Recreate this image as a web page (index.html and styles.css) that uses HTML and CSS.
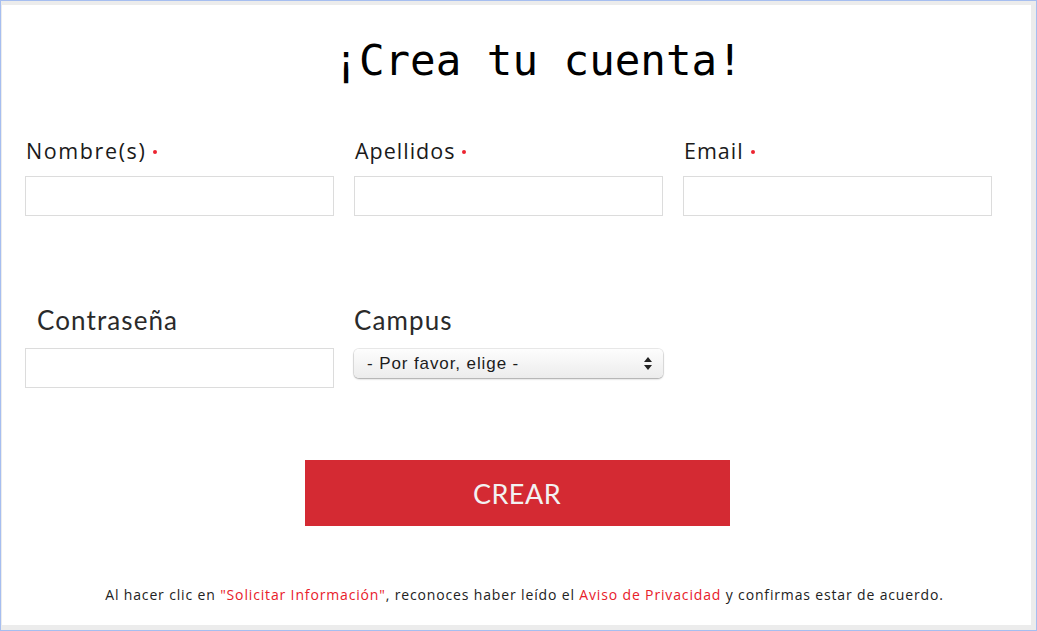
FILE: index.html
```html
<!DOCTYPE html>
<html lang="es">
<head>
<meta charset="utf-8">
<title>Crea tu cuenta</title>
<link rel="stylesheet" href="styles.css">
</head>
<body>
<div class="frame">
  <div class="card">
    <h1 class="title">¡Crea tu cuenta!</h1>
    <div class="row row-one">
      <div class="field">
        <label class="label label-wide">Nombre(s)<span class="req"></span></label>
        <input class="input" type="text">
      </div>
      <div class="field">
        <label class="label">Apellidos<span class="req"></span></label>
        <input class="input" type="text">
      </div>
      <div class="field">
        <label class="label">Email<span class="req"></span></label>
        <input class="input" type="text">
      </div>
    </div>
    <div class="row row-two">
      <div class="field">
        <label class="label-alt label-indent">Contraseña</label>
        <input class="input" type="password">
      </div>
      <div class="field">
        <label class="label-alt">Campus</label>
        <div class="select">
          <span class="select-text">- Por favor, elige -</span>
          <svg class="select-arrows" width="8" height="13" viewBox="0 0 8 13"><path d="M4 0 L8 5 H0 Z M0 8 H8 L4 13 Z" fill="#222"/></svg>
        </div>
      </div>
    </div>
    <div class="actions">
      <button class="btn" type="button">CREAR</button>
    </div>
    <p class="legal">Al hacer clic en <span class="link">"Solicitar Información"</span>, reconoces haber leído el <span class="link">Aviso de Privacidad</span> y confirmas estar de acuerdo.</p>
  </div>
</div>
</body>
</html>
```
FILE: styles.css
```css
html, body {
  margin: 0;
  padding: 0;
  background: #ffffff;
}
.frame {
  box-sizing: border-box;
  width: 1037px;
  height: 631px;
  border: 1px solid #a6bef0;
  background: #ececec;
  padding: 4px 5px 5px 1px;
}
.card {
  box-sizing: border-box;
  height: 100%;
  background: #ffffff;
  padding: 0 24px 0 23px;
  display: flex;
  flex-direction: column;
}
.title {
  margin: 31px 0 0 0;
  padding-left: 44px;
  text-align: center;
  font-family: "DejaVu Sans Mono", monospace;
  font-weight: normal;
  font-size: 42.5px;
  line-height: 50px;
  color: #000;
}
.row {
  display: grid;
  grid-template-columns: 309px 309px 309px;
  column-gap: 20px;
}
.row-one {
  margin-top: 50px;
}
.row-two {
  margin-top: 89px;
}
.field {
  display: flex;
  flex-direction: column;
}
.label {
  font-family: "Open Sans", sans-serif;
  font-size: 21.5px;
  letter-spacing: 1px;
  line-height: 30px;
  color: #1a1a1a;
  padding-left: 1px;
  margin-bottom: 10px;
  display: flex;
  align-items: center;
}
.label-wide {
  letter-spacing: 1.6px;
}
.req {
  display: inline-block;
  width: 4px;
  height: 4px;
  border-radius: 50%;
  background: #ec2430;
  margin-left: 7px;
  margin-top: 1px;
}
.label-alt {
  font-family: "Lato", sans-serif;
  font-size: 26px;
  letter-spacing: 1.1px;
  line-height: 30px;
  color: #2a2a2a;
  margin-bottom: 13px;
}
.label-indent {
  padding-left: 12px;
}
.input {
  box-sizing: border-box;
  width: 309px;
  height: 40px;
  border: 1px solid #dcdcdc;
  background: #fff;
  margin: 0;
}
.select {
  box-sizing: border-box;
  width: 309px;
  height: 29px;
  margin-top: 1px;
  border-radius: 5px;
  background: linear-gradient(#fdfdfd, #ececec);
  box-shadow: 0 0 0 1px rgba(0,0,0,0.08), 0 1px 2px rgba(0,0,0,0.3);
  display: flex;
  align-items: center;
  justify-content: space-between;
  padding: 0 11px 0 13px;
}
.select-text {
  font-family: "Liberation Sans", sans-serif;
  font-size: 17px;
  letter-spacing: 0.9px;
  color: #1c1c1c;
}
.actions {
  display: flex;
  justify-content: center;
  margin-top: 72px;
}
.btn {
  width: 425px;
  height: 66px;
  border: none;
  background: #d42a33;
  color: #f2f2f2;
  font-family: "Lato", sans-serif;
  font-size: 27px;
  font-weight: 400;
  letter-spacing: 0.5px;
  margin-left: 2px;
}
.legal {
  margin: 59px 0 0 0;
  text-align: center;
  padding-left: 17px;
  font-family: "Open Sans", sans-serif;
  font-size: 14px;
  letter-spacing: 0.85px;
  color: #222;
}
.link {
  color: #e8202a;
}
```
